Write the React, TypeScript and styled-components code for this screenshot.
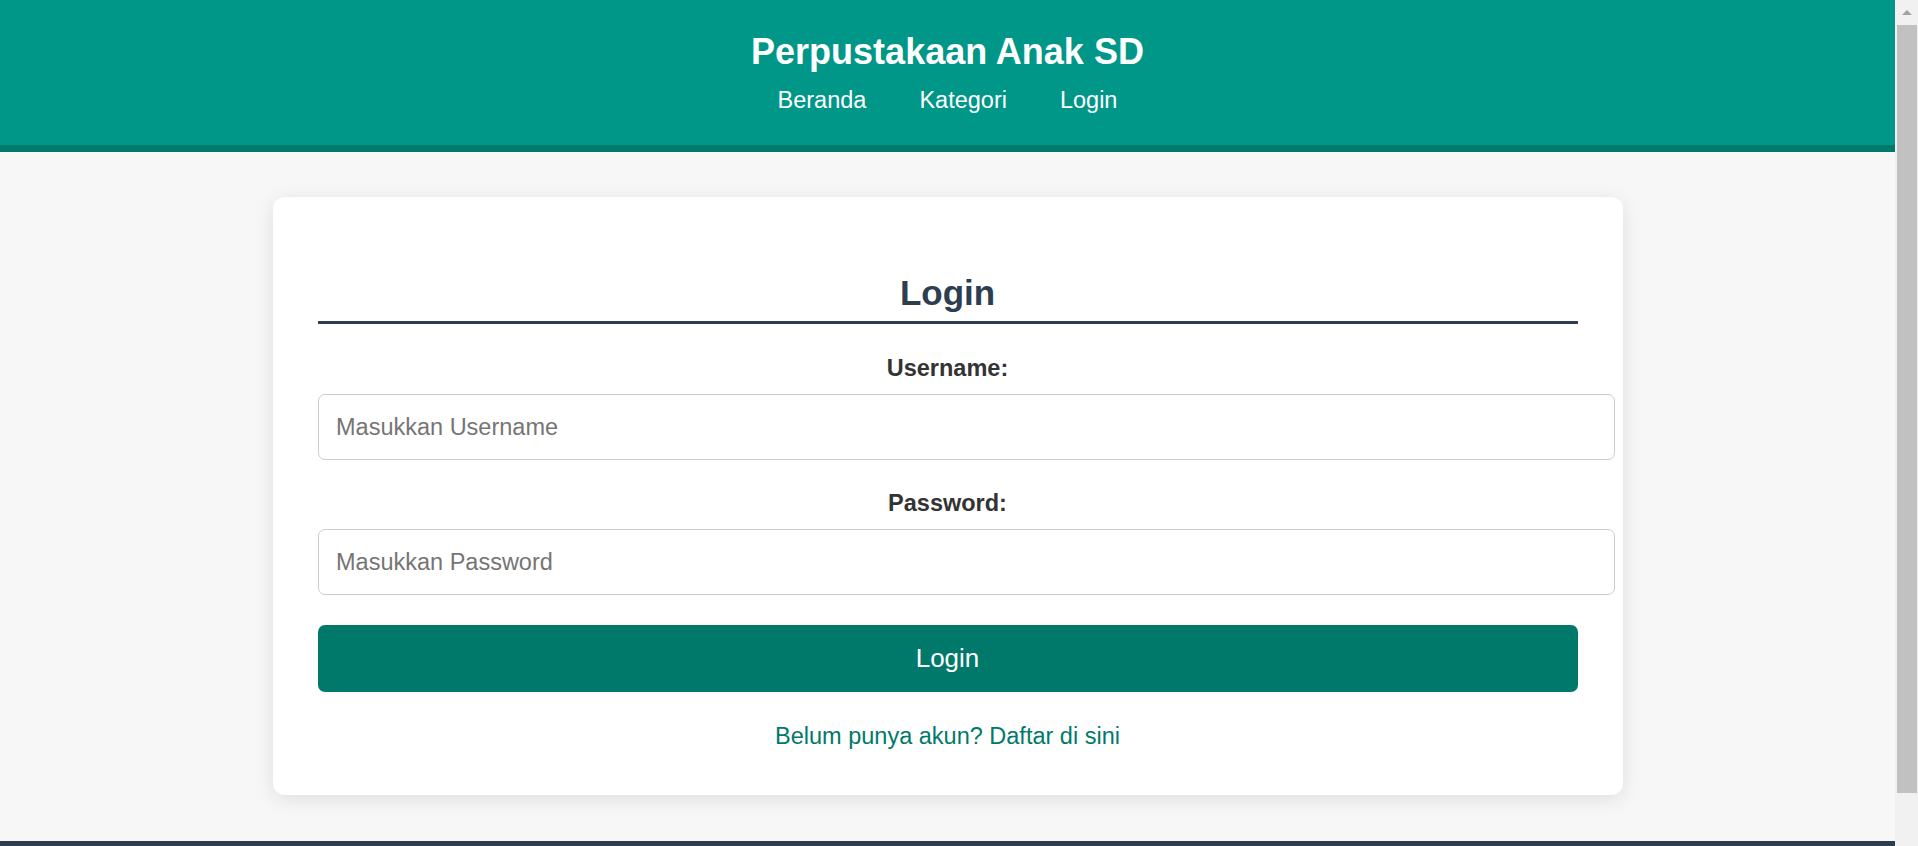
import React from "react";
import styled, { createGlobalStyle } from "styled-components";

const GlobalStyle = createGlobalStyle`
  html::-webkit-scrollbar {
    display: none;
  }

  body {
    margin: 0;
    background: #f7f7f7;
    font-family: "Liberation Sans", Arial, sans-serif;
  }
`;

const Page = styled.div`
  margin-right: 23px;
`;

// the browser's scrollbar, drawn over the right edge of the window
const ScrollTrack = styled.div`
  position: fixed;
  top: 0;
  right: 0;
  width: 23px;
  height: 100vh;
  background: #f1f1f1;
`;

const ScrollArrow = styled.div`
  position: absolute;
  top: 10px;
  left: 7px;
  width: 0;
  height: 0;
  border-left: 5px solid transparent;
  border-right: 5px solid transparent;
  border-bottom: 5px solid #a3a3a3;
`;

const ScrollThumb = styled.div`
  position: absolute;
  top: 25px;
  left: 2px;
  right: 1px;
  height: 768px;
  background: #c1c1c1;
`;

const Header = styled.header`
  background: #009688;
  border-bottom: 7px solid #00796b;
  padding: 31px 0 31px;
  text-align: center;
  color: #fff;

  h1 {
    margin: 0;
    font-size: 36px;
    line-height: 41px;
    font-weight: bold;
  }
`;

const Nav = styled.nav`
  margin-top: 15px;
  display: flex;
  justify-content: center;
  gap: 53px;

  a {
    color: #fff;
    text-decoration: none;
    font-size: 23.5px;
    line-height: 27px;
  }
`;

const Main = styled.main`
  padding: 45px 0 46px;
`;

const Card = styled.div`
  max-width: 1260px;
  margin: 0 auto;
  padding: 45px;
  background: #fff;
  border-radius: 12px;
  box-shadow: 0 4px 20px rgba(0, 0, 0, 0.1);
`;

const Title = styled.h2`
  margin: 31px 0;
  padding-bottom: 8px;
  border-bottom: 3px solid #2c3e50;
  color: #2c3e50;
  font-size: 35px;
  line-height: 40px;
  text-align: center;
`;

const Field = styled.div`
  margin-bottom: 30px;
`;

const Label = styled.label`
  display: block;
  margin-bottom: 12px;
  text-align: center;
  color: #333;
  font-size: 23.5px;
  line-height: 27px;
  font-weight: bold;
`;

const Input = styled.input`
  display: block;
  box-sizing: content-box;
  width: 100%;
  height: 27px;
  padding: 18.5px 17.5px;
  margin: 0;
  border: 1px solid #ccc;
  border-radius: 7px;
  background: #fff;
  font-family: inherit;
  font-size: 23.5px;
  line-height: 27px;
  color: #333;
  outline: none;

  &::placeholder {
    color: #757575;
  }
`;

const Button = styled.button`
  display: block;
  width: 100%;
  height: 67px;
  border: none;
  border-radius: 7px;
  background: #00796b;
  color: #fff;
  font-family: inherit;
  font-size: 26px;
  cursor: pointer;
`;

const Register = styled.p`
  margin: 31px 0 0;
  text-align: center;
  font-size: 23.5px;
  line-height: 27px;

  a {
    color: #00796b;
    text-decoration: none;
  }
`;

const Footer = styled.footer`
  background: #2c3e50;
  height: 36px;
`;

export default function App() {
  return (
    <>
      <GlobalStyle />
      <Page>
        <Header>
          <h1>Perpustakaan Anak SD</h1>
          <Nav>
            <a href="#">Beranda</a>
            <a href="#">Kategori</a>
            <a href="#">Login</a>
          </Nav>
        </Header>
        <Main>
          <Card>
            <Title>Login</Title>
            <form onSubmit={(e) => e.preventDefault()}>
              <Field>
                <Label htmlFor="username">Username:</Label>
                <Input id="username" type="text" placeholder="Masukkan Username" />
              </Field>
              <Field>
                <Label htmlFor="password">Password:</Label>
                <Input id="password" type="password" placeholder="Masukkan Password" />
              </Field>
              <Button type="submit">Login</Button>
            </form>
            <Register>
              <a href="#">Belum punya akun? Daftar di sini</a>
            </Register>
          </Card>
        </Main>
        <Footer />
      </Page>
      <ScrollTrack>
        <ScrollArrow />
        <ScrollThumb />
      </ScrollTrack>
    </>
  );
}
